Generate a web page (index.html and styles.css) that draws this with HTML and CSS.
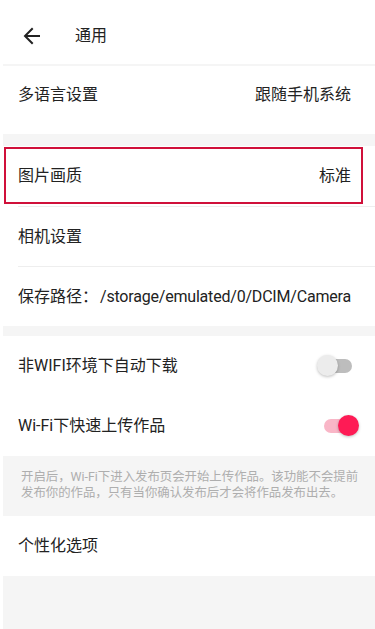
FILE: index.html
```html
<!DOCTYPE html>
<html lang="zh-CN">

<head>
  <meta charset="UTF-8">
  <meta name="viewport" content="width=device-width, initial-scale=1.0">
  <title>通用</title>
  <link rel="stylesheet" href="styles.css">
</head>

<body>
  <div class="page">
    <div class="header">
      <span class="back">
        <svg width="18" height="18" viewBox="0 0 18 18">
          <path d="M16 9H2.5M9 2L2 9l7 7" fill="none" stroke="#222" stroke-width="2" stroke-linecap="square" />
        </svg>
      </span>
      <span class="title">通用</span>
    </div>

    <div class="group group-first">
      <div class="row row-lang">
        <div class="row-body">
          <span class="label">多语言设置</span>
          <span class="value">跟随手机系统</span>
        </div>
      </div>
    </div>

    <div class="group">
      <div class="row marked">
        <div class="row-body">
          <span class="label">图片画质</span>
          <span class="value">标准</span>
        </div>
      </div>
      <div class="row">
        <div class="row-body divided">
          <span class="label">相机设置</span>
        </div>
      </div>
      <div class="row">
        <div class="row-body divided path-row">
          <span class="label">保存路径：<span class="path">/storage/emulated/0/DCIM/Camera</span></span>
        </div>
      </div>
    </div>

    <div class="group">
      <div class="row">
        <div class="row-body switch-row">
          <span class="label">非WIFI环境下自动下载</span>
          <span class="switch"><span class="track"></span><span class="thumb"></span></span>
        </div>
      </div>
      <div class="row">
        <div class="row-body switch-row">
          <span class="label">Wi-Fi下快速上传作品</span>
          <span class="switch on"><span class="track"></span><span class="thumb"></span></span>
        </div>
      </div>
    </div>

    <div class="note">开启后，Wi-Fi下进入发布页会开始上传作品。该功能不会提前发布你的作品，只有当你确认发布后才会将作品发布出去。</div>

    <div class="group">
      <div class="row">
        <div class="row-body">
          <span class="label">个性化选项</span>
        </div>
      </div>
    </div>
  </div>
</body>

</html>
```

FILE: styles.css
```css
html,
body {
  margin: 0;
  padding: 0;
  background: #FFF;
  font-family: Roboto, "Noto Sans CJK SC", sans-serif;
  color: #222;
}

* {
  box-sizing: border-box;
}

.page {
  margin-left: 3px;
  min-height: 100vh;
  background: #F5F5F5;
}

.header {
  height: 64px;
  padding-top: 8px;
  display: flex;
  align-items: center;
  background: #FFF;
}

.header .back {
  display: flex;
  width: 72px;
  padding-left: 20px;
}

.header .title {
  font-size: 16px;
  line-height: 22px;
}

.group {
  background: #FFF;
  margin-top: 10px;
}

.group-first {
  margin-top: 2px;
  margin-bottom: 12px;
}

.group-first+.group {
  margin-top: 0;
}

.row {
  padding-left: 15px;
  position: relative;
}

.row-body {
  height: 60px;
  display: flex;
  align-items: center;
  justify-content: space-between;
  padding-right: 24px;
  font-size: 16px;
  line-height: 22px;
  white-space: nowrap;
}

.row-body.divided {
  border-top: 1px solid #EEE;
}

.row-lang .row-body {
  height: 68px;
  align-items: flex-start;
  padding-top: 18px;
}

.path-row {
  padding-right: 0;
}

.path {
  margin-left: 2px;
  letter-spacing: -0.2px;
}

.marked::after {
  content: '';
  position: absolute;
  left: 1px;
  right: 12px;
  top: 1px;
  bottom: 2px;
  border: 2px solid #D0103A;
}

.switch-row {
  padding-right: 16px;
}

.switch {
  position: relative;
  width: 42px;
  height: 22px;
}

.switch .track {
  position: absolute;
  left: 7px;
  right: 7px;
  top: 4px;
  height: 14px;
  border-radius: 7px;
  background: #BDBDBD;
}

.switch .thumb {
  position: absolute;
  left: 0;
  top: 0;
  width: 21px;
  height: 21px;
  border-radius: 50%;
  background: #ECECEC;
  box-shadow: 0 1px 3px rgba(0, 0, 0, 0.25);
}

.switch.on .track {
  background: #F9B6C7;
}

.switch.on .thumb {
  left: auto;
  right: 0;
  background: #FE1B55;
}

.note {
  height: 60px;
  padding: 13px 10px 0 18px;
  font-size: 12.4px;
  line-height: 16px;
  color: #AEAEAE;
}

.note+.group {
  margin-top: 0;
}
```
